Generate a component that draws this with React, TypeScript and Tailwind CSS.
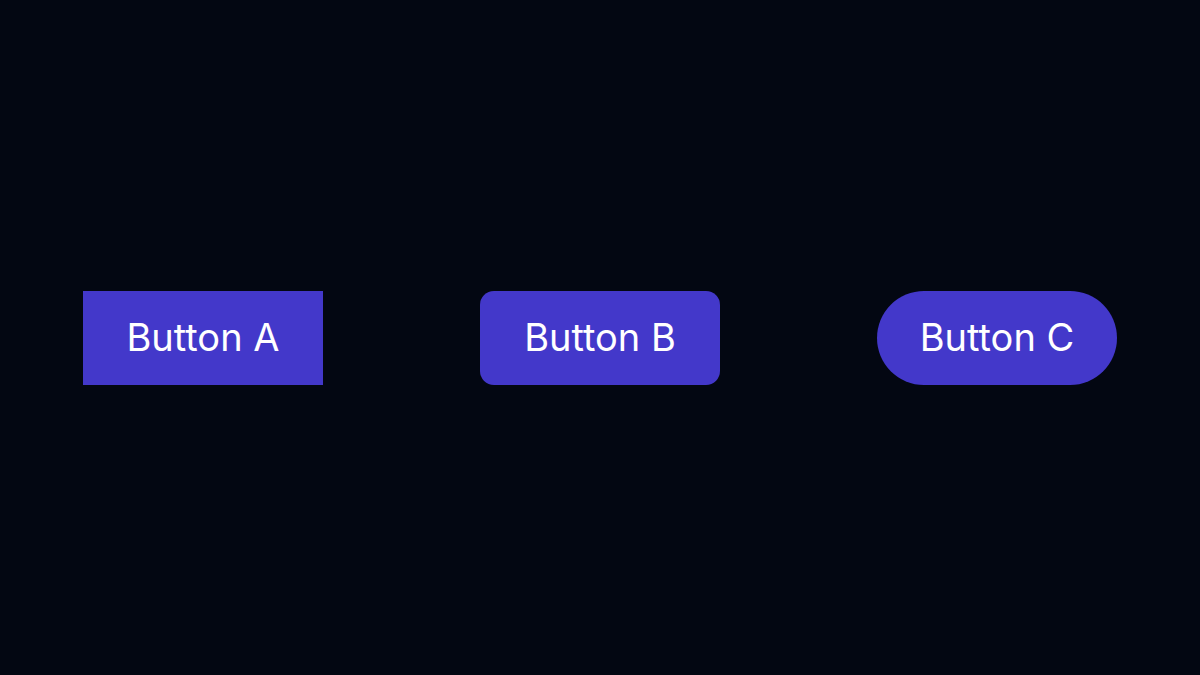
import React from "react";

const buttons = [
  { label: "Button A", shape: "rounded-none" },
  { label: "Button B", shape: "rounded-[14px]" },
  { label: "Button C", shape: "rounded-full" },
];

export default function App() {
  return (
    <div
      className="flex h-[675px] w-[1200px] items-center justify-center gap-[157px] bg-[#030712]"
      style={{ fontFamily: "Inter, 'Noto Sans', sans-serif" }}
    >
      {buttons.map((b) => (
        <button
          key={b.label}
          className={`flex h-[94px] w-[240px] items-center justify-center bg-[#4338ca] text-[38px] font-normal text-white ${b.shape}`}
        >
          {b.label}
        </button>
      ))}
    </div>
  );
}
